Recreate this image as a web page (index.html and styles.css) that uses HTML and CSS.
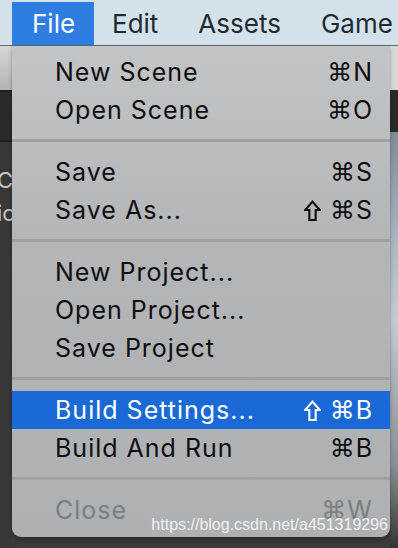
FILE: index.html
```html
<!DOCTYPE html>
<html>
<head>
<meta charset="utf-8">
<link rel="stylesheet" href="styles.css">
</head>
<body>
<div class="screen">
  <div class="menubar">
    <span class="mb-item active">File</span>
    <span class="mb-item">Edit</span>
    <span class="mb-item">Assets</span>
    <span class="mb-item">Game</span>
  </div>
  <div class="desk">
    <div class="left-pane">
      <div class="lp-top"></div>
      <div class="lp-toolbar"></div>
      <div class="lp-body">
        <div class="lp-text">Ca</div>
        <div class="lp-text">ic</div>
      </div>
    </div>
    <div class="mid-pane"></div>
    <div class="right-pane">
      <div class="rp-top"></div>
      <div class="rp-dark"></div>
      <div class="rp-scene"></div>
    </div>
  </div>
  <div class="menu">
    <div class="row"><span class="label">New Scene</span><span class="key"><span class="cmd">⌘</span>N</span></div>
    <div class="row"><span class="label">Open Scene</span><span class="key"><span class="cmd">⌘</span>O</span></div>
    <div class="sep"></div>
    <div class="row"><span class="label">Save</span><span class="key"><span class="cmd">⌘</span>S</span></div>
    <div class="row"><span class="label">Save As...</span><span class="key"><svg class="shift" viewBox="0 0 16 20" width="17" height="21"><path d="M8 1.5 L15 9.5 L11 9.5 L11 19 L5 19 L5 9.5 L1 9.5 Z" fill="none" stroke="currentColor" stroke-width="2" stroke-linejoin="miter"/></svg><span class="cmd">⌘</span>S</span></div>
    <div class="sep"></div>
    <div class="row"><span class="label">New Project...</span></div>
    <div class="row"><span class="label">Open Project...</span></div>
    <div class="row"><span class="label">Save Project</span></div>
    <div class="sep"></div>
    <div class="row selected"><span class="label">Build Settings...</span><span class="key"><svg class="shift" viewBox="0 0 16 20" width="17" height="21"><path d="M8 1.5 L15 9.5 L11 9.5 L11 19 L5 19 L5 9.5 L1 9.5 Z" fill="none" stroke="currentColor" stroke-width="2" stroke-linejoin="miter"/></svg><span class="cmd">⌘</span>B</span></div>
    <div class="row"><span class="label">Build And Run</span><span class="key"><span class="cmd">⌘</span>B</span></div>
    <div class="sep"></div>
    <div class="row disabled"><span class="label">Close</span><span class="key"><span class="cmd">⌘</span>W</span></div>
    <div class="watermark">https://blog.csdn.net/a451319296</div>
  </div>
</div>
</body>
</html>
```
FILE: styles.css
```css
html, body {
  margin: 0;
  padding: 0;
  background: #353535;
}
.screen {
  position: relative;
  width: 398px;
  height: 548px;
  overflow: hidden;
  font-family: Inter, "Open Sans", "DejaVu Sans", sans-serif;
}
.menubar {
  height: 43px;
  padding-top: 2px;
  border-bottom: 1px solid #5c6a72;
  background: #d3e2ea;
  display: flex;
  align-items: stretch;
  padding-left: 12px;
  white-space: nowrap;
}
.mb-item {
  font-size: 26px;
  color: #1f2a30;
  display: flex;
  align-items: center;
  padding: 0 20px 0 20px;
  line-height: 1;
}
.mb-item.active {
  background: #2e7de0;
  color: #ffffff;
  width: 42px;
}
.mb-item:nth-child(2) { padding-left: 18px; padding-right: 20px; }
.desk {
  display: flex;
  height: 502px;
}
.left-pane {
  width: 12px;
  display: flex;
  flex-direction: column;
  background: #333333;
  overflow: hidden;
}
.lp-top {
  height: 44px;
  background: linear-gradient(#d6d6d6, #b4b4b4);
}
.lp-toolbar {
  height: 48px;
  background: #2b2b2b;
  border-top: 2px solid #1e1e1e;
  border-bottom: 2px solid #1e1e1e;
}
.lp-body {
  flex: 1;
  background: #383838;
  padding-top: 22px;
}
.lp-text {
  color: #c9c9c9;
  font-size: 22px;
  line-height: 33px;
  margin-left: -3px;
  white-space: nowrap;
}
.mid-pane {
  width: 378px;
  background: #3a3a3a;
}
.right-pane {
  width: 8px;
  display: flex;
  flex-direction: column;
}
.rp-top {
  height: 44px;
  background: #d9d9d9;
}
.rp-dark {
  height: 42px;
  background: #2a2a2a;
}
.rp-scene {
  flex: 1;
  background: linear-gradient(#7f8c99 0%, #a9b6c1 25%, #c4ccd2 45%, #8b8f93 80%, #5a5a5a 92%, #333 100%);
}
.menu {
  position: absolute;
  left: 12px;
  top: 46px;
  width: 378px;
  padding: 7px 0 8px 0;
  background: linear-gradient(#c2c4c6, #b3b5b7 40%, #aeb0b2);
  border-radius: 0 0 9px 9px;
  box-shadow: 0 2px 4px rgba(0,0,0,0.3);
  color: #0e0e0e;
}
.row {
  height: 38px;
  display: flex;
  align-items: center;
  justify-content: space-between;
  padding: 0 18px 0 43px;
  font-size: 25px;
  letter-spacing: 1px;
  white-space: nowrap;
}
.key {
  display: flex;
  align-items: center;
  letter-spacing: 0;
}
.cmd {
  font-family: "DejaVu Sans", sans-serif;
  font-size: 25px;
  margin-right: 1px;
}
.shift {
  flex-shrink: 0;
  margin-right: 9px;
  margin-top: 1px;
}
.row.selected {
  background: #1b69d6;
  color: #ffffff;
}
.row.disabled {
  color: #7c7e80;
}
.sep {
  height: 3px;
  margin: 10px 0 11px 0;
  background: #9ea0a2;
}
.watermark {
  position: absolute;
  right: 2px;
  bottom: 3px;
  font-family: "Liberation Sans", Arial, sans-serif;
  font-size: 16px;
  letter-spacing: 0;
  color: rgba(255,255,255,0.85);
  white-space: nowrap;
}
```
